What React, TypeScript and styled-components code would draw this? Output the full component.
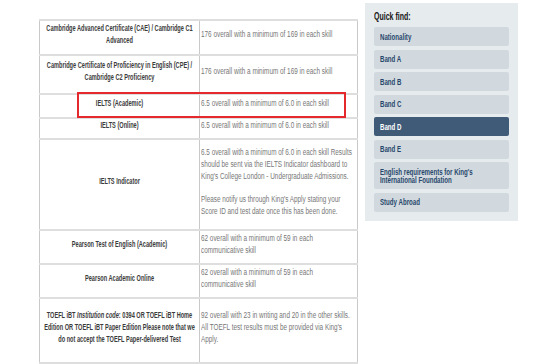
import React, { FC } from 'react';
import styled, { createGlobalStyle } from 'styled-components';

const SANS = `'Liberation Sans', Arial, sans-serif`;

const GlobalStyle = createGlobalStyle`
  html, body {
    margin: 0;
    padding: 0;
    background: #ffffff;
    overflow: hidden;
  }
  body {
    font-family: ${SANS};
    width: 553px;
    height: 364px;
  }
`;

// the site font is a tall condensed face; squeeze Liberation Sans horizontally to get close
const Squeeze = styled.div<{ $k: number }>`
  width: ${p => 100 / p.$k}%;
  transform: scaleX(${p => p.$k});
  transform-origin: left center;
`;

const Page = styled.div`
  display: flex;
  align-items: flex-start;
  gap: 7px;
  padding: 3px 0 0 39px;
`;

const TableWrap = styled.div`
  position: relative;
  margin-top: 16px;
  width: 319px;
`;

const Table = styled.table`
  border-collapse: collapse;
  width: 319px;
  table-layout: fixed;
`;

const Row = styled.tr<{ $h: number }>`
  height: ${p => p.$h}px;
`;

const Cell = styled.td`
  border-top: 2px solid #dedede;
  border-bottom: 2px solid #dedede;
  border-left: 1px solid #c9c9c9;
  border-right: 1px solid #c9c9c9;
  padding: 0 2px 7px;
  vertical-align: middle;
  line-height: 12px;
  overflow: hidden;
`;

const NameCell = styled(Cell)`
  width: 155px;
  text-align: center;
  font-size: 8.5px;
  font-weight: bold;
  color: #3b3b3b;
`;

const ValueCell = styled(Cell)`
  color: #777777;
  padding-left: 1px;
  font-size: 8.5px;

  p {
    margin: 0 0 11px;
  }
  p:last-child {
    margin-bottom: 0;
  }
`;

const Highlight = styled.div`
  position: absolute;
  left: 38px;
  top: 73px;
  width: 265px;
  height: 22px;
  border: 2px solid #e5282c;
  pointer-events: none;
`;

const Sidebar = styled.nav`
  width: 135px;
  background: #e6ebee;
  padding: 8px 9px 9px;
  display: flex;
  flex-direction: column;
  gap: 3.5px;
`;

const SideTitle = styled.div`
  font-size: 10px;
  font-weight: bold;
  color: #151515;
  line-height: 12px;
  margin-bottom: 0.5px;
`;

const SideLink = styled.a<{ $active?: boolean }>`
  display: block;
  background: ${p => (p.$active ? '#3f5b78' : '#d1d9df')};
  color: ${p => (p.$active ? '#ffffff' : '#27476b')};
  border-radius: 2px;
  padding: 5.5px 6px;
  font-size: 8.5px;
  font-weight: bold;
  line-height: 8px;
  text-decoration: none;
  overflow: hidden;
`;

type IRow = { h: number; name: React.ReactNode; value: React.ReactNode };

const ROWS: IRow[] = [
  {
    h: 35,
    name: 'Cambridge Advanced Certificate (CAE) / Cambridge C1 Advanced',
    value: '176 overall with a minimum of 169 in each skill',
  },
  {
    h: 39,
    name: 'Cambridge Certificate of Proficiency in English (CPE) / Cambridge C2 Proficiency',
    value: '176 overall with a minimum of 169 in each skill',
  },
  { h: 24, name: 'IELTS (Academic)', value: '6.5 overall with a minimum of 6.0 in each skill' },
  { h: 21, name: 'IELTS (Online)', value: '6.5 overall with a minimum of 6.0 in each skill' },
  {
    h: 91,
    name: 'IELTS Indicator',
    value: (
      <>
        <p>
          6.5 overall with a minimum of 6.0 in each skill Results should be sent via the IELTS Indicator
          dashboard to King's College London - Undergraduate Admissions.
        </p>
        <p>Please notify us through King's Apply stating your Score ID and test date once this has been done.</p>
      </>
    ),
  },
  {
    h: 34,
    name: 'Pearson Test of English (Academic)',
    value: '62 overall with a minimum of 59 in each communicative skill',
  },
  {
    h: 34,
    name: 'Pearson Academic Online',
    value: '62 overall with a minimum of 59 in each communicative skill',
  },
  {
    h: 65,
    name: (
      <>
        TOEFL iBT <i>Institution code</i>: 0394 OR TOEFL iBT Home Edition OR TOEFL iBT Paper Edition Please note
        that we do not accept the TOEFL Paper-delivered Test
      </>
    ),
    value: "92 overall with 23 in writing and 20 in the other skills. All TOEFL test results must be provided via King's Apply.",
  },
  { h: 40, name: '', value: '' },
];

const LINKS = [
  'Nationality',
  'Band A',
  'Band B',
  'Band C',
  'Band D',
  'Band E',
  "English requirements for King's International Foundation",
  'Study Abroad',
];

const App: FC = () => (
  <>
    <GlobalStyle />
    <Page>
      <TableWrap>
        <Table>
          <tbody>
            {ROWS.map((r, i) => (
              <Row key={i} $h={r.h}>
                <NameCell>
                  <Squeeze $k={0.66}>{r.name}</Squeeze>
                </NameCell>
                <ValueCell>
                  <Squeeze $k={0.75}>{r.value}</Squeeze>
                </ValueCell>
              </Row>
            ))}
          </tbody>
        </Table>
        <Highlight />
      </TableWrap>
      <Sidebar>
        <SideTitle>
          <Squeeze $k={0.7}>Quick find:</Squeeze>
        </SideTitle>
        {LINKS.map(l => (
          <SideLink key={l} href="#" $active={l === 'Band D'}>
            <Squeeze $k={0.72}>{l}</Squeeze>
          </SideLink>
        ))}
      </Sidebar>
    </Page>
  </>
);

export default App;
